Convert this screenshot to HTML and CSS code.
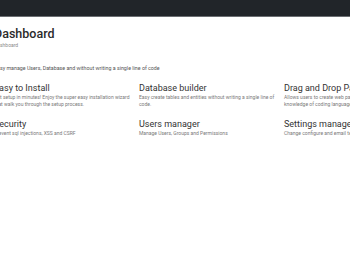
FILE: index.html
```html
<!DOCTYPE html>
<html lang="en">
<head>
<meta charset="utf-8">
<title>Dashboard</title>
<link rel="stylesheet" href="styles.css">
</head>
<body>
<nav class="topbar"></nav>
<main class="container">
  <h1 class="page-title">Dashboard</h1>
  <div class="subtitle">Dashboard</div>
  <p class="intro">Easy manage Users, Database and without writing a single line of code</p>
  <section class="features">
    <div class="feature">
      <h2 class="feature-title">Easy to Install</h2>
      <p class="feature-text">Get setup in minutes! Enjoy the super easy installation wizard that walk you through the setup process.</p>
    </div>
    <div class="feature">
      <h2 class="feature-title">Database builder</h2>
      <p class="feature-text">Easy create tables and entities without writing a single line of code.</p>
    </div>
    <div class="feature">
      <h2 class="feature-title">Drag and Drop Pages</h2>
      <p class="feature-text">Allows users to create web pages without having any knowledge of coding languages.</p>
    </div>
    <div class="feature">
      <h2 class="feature-title">Security</h2>
      <p class="feature-text">Prevent sql injections, XSS and CSRF</p>
    </div>
    <div class="feature">
      <h2 class="feature-title">Users manager</h2>
      <p class="feature-text">Manage Users, Groups and Permissions</p>
    </div>
    <div class="feature">
      <h2 class="feature-title">Settings manager</h2>
      <p class="feature-text">Change configure and email templates</p>
    </div>
  </section>
</main>
</body>
</html>
```
FILE: styles.css
```css
html, body {
  margin: 0;
  padding: 0;
  background: #fff;
  overflow: hidden;
  width: 350px;
  height: 263px;
  font-family: Roboto, "Liberation Sans", Arial, sans-serif;
}

.topbar {
  height: 16px;
  background: #212529;
  border-bottom: 1px solid #6b6e72;
}

.container {
  margin-left: -6px;
  width: 429px;
}

.page-title {
  margin: 9px 0 0;
  font-size: 12.5px;
  line-height: 15px;
  font-weight: 500;
  color: #2b2b2b;
}

.subtitle {
  margin-top: 1px;
  font-size: 5px;
  line-height: 7px;
  color: #8a8a8a;
}

.intro {
  margin: 16px 0 0;
  font-size: 5.3px;
  line-height: 7px;
  color: #555;
}

.features {
  margin-top: 11px;
  display: grid;
  grid-template-columns: repeat(3, 139px);
  column-gap: 6px;
  row-gap: 11px;
}

.feature-title {
  margin: 0;
  font-size: 9px;
  line-height: 11px;
  font-weight: 400;
  color: #333;
}

.feature-text {
  margin: 0;
  font-size: 5px;
  line-height: 7px;
  color: #7a7a7a;
}
```
